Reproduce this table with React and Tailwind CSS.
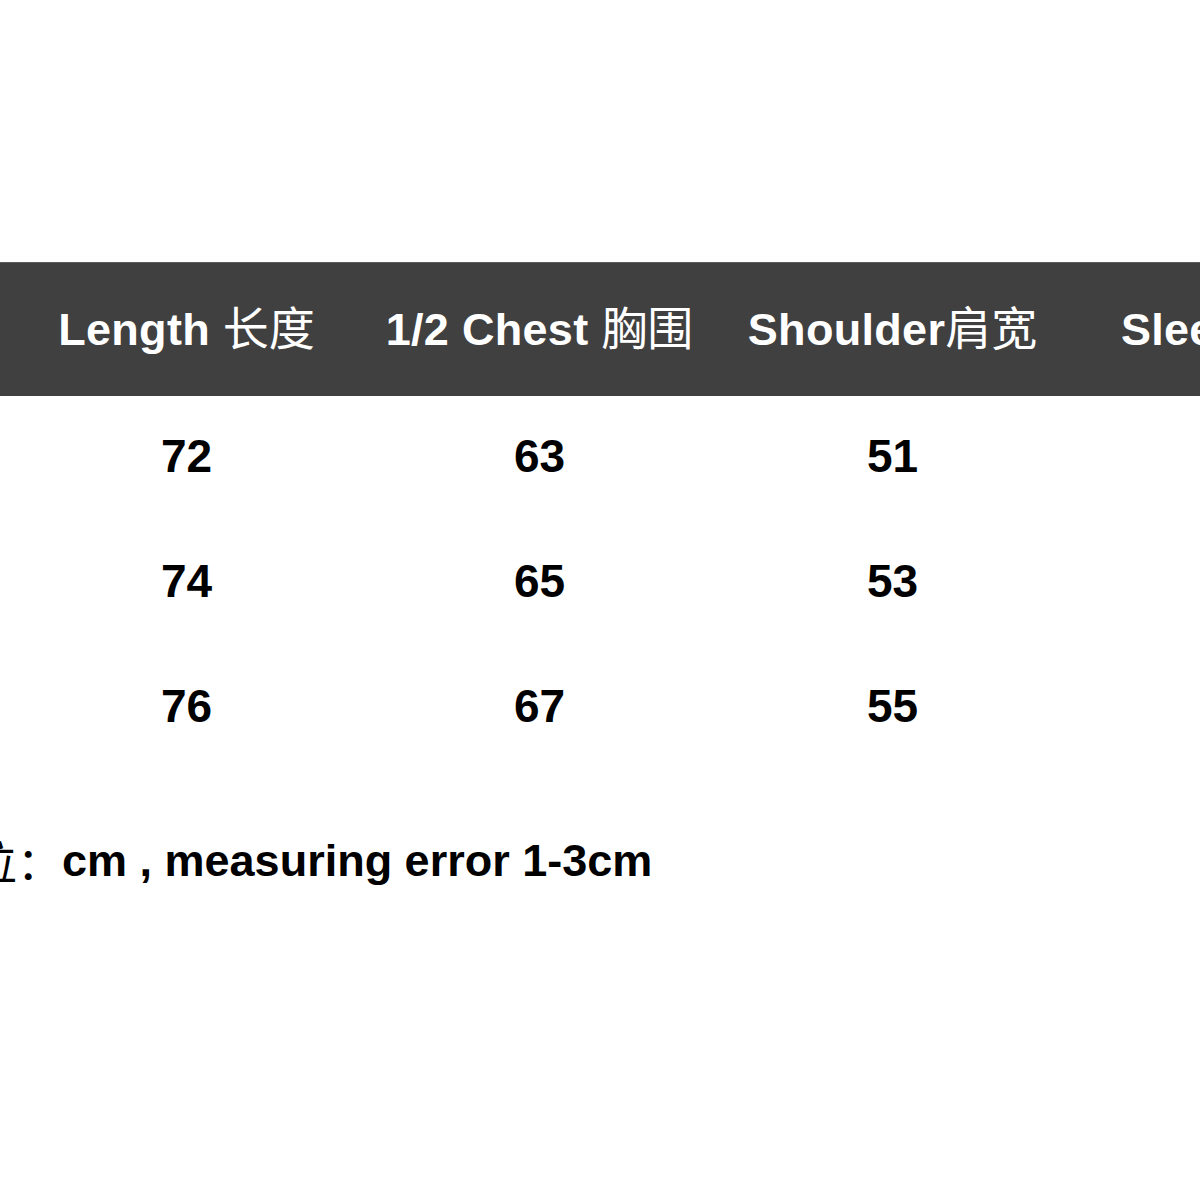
import React from "react";

const cols = [
  { en: "Length ", cn: "长度" },
  { en: "1/2 Chest ", cn: "胸围" },
  { en: "Shoulder", cn: "肩宽" },
  { en: "Sleeve ", cn: "袖长" },
];

const rows = [
  ["72", "63", "51", ""],
  ["74", "65", "53", ""],
  ["76", "67", "55", ""],
];

export default function App() {
  return (
    <div className="w-[1200px] h-[1200px] bg-white overflow-hidden font-['Liberation_Sans','Noto_Sans_CJK_SC',sans-serif]">
      <div className="h-[262px]" />
      <div className="h-[134px] bg-[#404040] border-t border-[#5c5c5c] flex pl-[10px]">
        {cols.map((c, i) => (
          <div
            key={i}
            className="w-[353px] shrink-0 flex items-center justify-center pb-[6px] text-white text-[45px] leading-none whitespace-pre"
          >
            <span>
              <span className="font-bold tracking-[0.3px]">{c.en}</span>
              <span className="font-['Noto_Sans_CJK_SC',sans-serif] font-normal text-[46px]">{c.cn}</span>
            </span>
          </div>
        ))}
      </div>
      {rows.map((r, ri) => (
        <div key={ri} className="h-[125px] flex pl-[10px]">
          {r.map((v, ci) => (
            <div
              key={ci}
              className="w-[353px] shrink-0 flex items-center justify-center pb-[5px] text-black font-bold text-[46px] leading-none"
            >
              {v}
            </div>
          ))}
        </div>
      ))}
      <div className="mt-[44px] h-[90px] flex items-center ml-[-73px] whitespace-nowrap text-black text-[45px] leading-none font-bold">
        <span className="w-[135px] shrink-0 font-['Noto_Sans_CJK_SC',sans-serif] font-normal">单位：</span>
        <span>cm , measuring error 1-3cm</span>
      </div>
    </div>
  );
}
